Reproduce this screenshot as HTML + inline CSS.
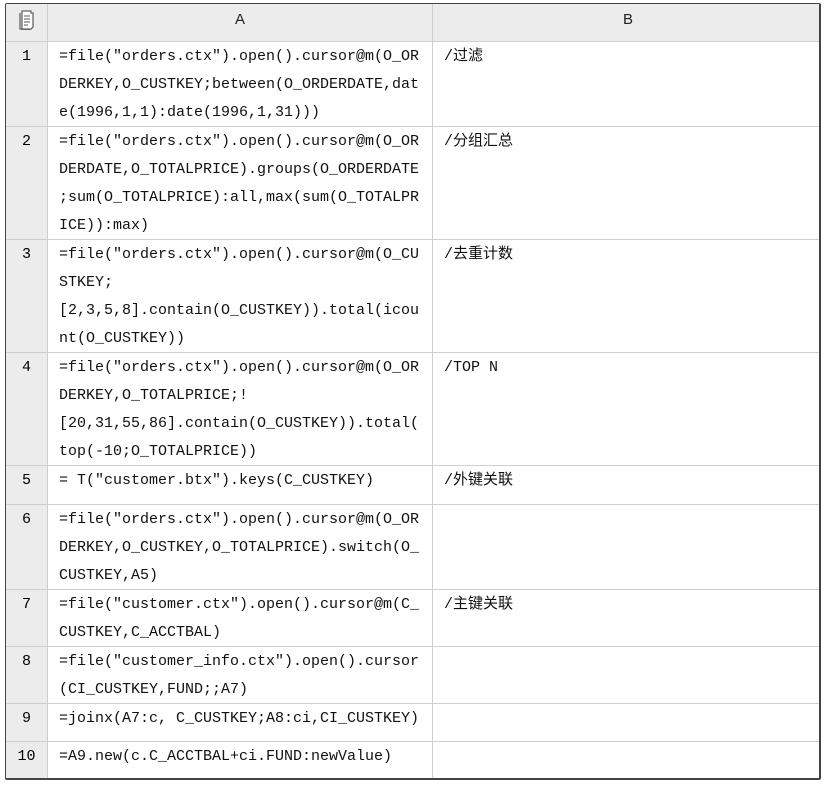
<!DOCTYPE html>
<html><head><meta charset="utf-8"><style>
*{box-sizing:border-box}
body{margin:0;background:#fff;width:826px;height:787px;position:relative;overflow:hidden}
.t{position:absolute;left:5px;top:3px;width:816px;height:777px;border:1px solid #444;border-right-width:2px;border-bottom-width:2px;border-radius:2px;overflow:hidden;background:#fff}
.h{position:absolute;top:0;height:38px;background:#ececec;border-bottom:1px solid #cfcfcf;font:15px "Liberation Sans",sans-serif;text-align:center;line-height:32px;color:#222}
.r{position:absolute;left:0;width:813px;border-bottom:1px solid #cfcfcf}
.n{position:absolute;left:0;top:0;bottom:0;width:42px;background:#ececec;border-right:1px solid #cfcfcf;font:15px "Liberation Mono",monospace;text-align:center;line-height:28px;padding-top:1px}
.a{position:absolute;left:42px;top:0;bottom:0;width:385px;border-right:1px solid #cfcfcf;padding-left:11px;padding-top:1px;font:15px "Liberation Mono",monospace;line-height:28px;white-space:pre;color:#111}
.b{position:absolute;left:427px;top:0;padding-left:11px;padding-top:1px;font:15px "Liberation Mono","Noto Sans CJK SC",monospace;line-height:28px;white-space:pre;color:#111}
</style></head><body>
<div class="t">
<div class="h" style="left:0;width:42px;border-right:1px solid #cfcfcf">
<svg width="18" height="20" viewBox="0 0 18 20" style="margin-top:6px"><path d="M4 1h9v2h2v14l-3 3H4z" fill="#fff" stroke="#666" stroke-width="1.3"/><path d="M2 3v16h10" fill="none" stroke="#666" stroke-width="1.3"/><path d="M6 6h6M6 9h6M6 12h6M6 15h4" stroke="#777" stroke-width="1.2"/></svg></div>
<div class="h" style="left:42px;width:385px;border-right:1px solid #cfcfcf">A</div>
<div class="h" style="left:427px;width:390px">B</div>

<div class="r" style="top:38px;height:85px"><div class="n">1</div><div class="a">=file("orders.ctx").open().cursor@m(O_OR
DERKEY,O_CUSTKEY;between(O_ORDERDATE,dat
e(1996,1,1):date(1996,1,31)))</div><div class="b">/过滤</div></div>

<div class="r" style="top:123px;height:113px"><div class="n">2</div><div class="a">=file("orders.ctx").open().cursor@m(O_OR
DERDATE,O_TOTALPRICE).groups(O_ORDERDATE
;sum(O_TOTALPRICE):all,max(sum(O_TOTALPR
ICE)):max)</div><div class="b">/分组汇总</div></div>

<div class="r" style="top:236px;height:113px"><div class="n">3</div><div class="a">=file("orders.ctx").open().cursor@m(O_CU
STKEY;
[2,3,5,8].contain(O_CUSTKEY)).total(icou
nt(O_CUSTKEY))</div><div class="b">/去重计数</div></div>

<div class="r" style="top:349px;height:113px"><div class="n">4</div><div class="a">=file("orders.ctx").open().cursor@m(O_OR
DERKEY,O_TOTALPRICE;!
[20,31,55,86].contain(O_CUSTKEY)).total(
top(-10;O_TOTALPRICE))</div><div class="b">/TOP N</div></div>

<div class="r" style="top:462px;height:39px"><div class="n">5</div><div class="a">= T("customer.btx").keys(C_CUSTKEY)</div><div class="b">/外键关联</div></div>

<div class="r" style="top:501px;height:85px"><div class="n">6</div><div class="a">=file("orders.ctx").open().cursor@m(O_OR
DERKEY,O_CUSTKEY,O_TOTALPRICE).switch(O_
CUSTKEY,A5)</div></div>

<div class="r" style="top:586px;height:57px"><div class="n">7</div><div class="a">=file("customer.ctx").open().cursor@m(C_
CUSTKEY,C_ACCTBAL)</div><div class="b">/主键关联</div></div>

<div class="r" style="top:643px;height:57px"><div class="n">8</div><div class="a">=file("customer_info.ctx").open().cursor
(CI_CUSTKEY,FUND;;A7)</div></div>

<div class="r" style="top:700px;height:38px"><div class="n">9</div><div class="a">=joinx(A7:c, C_CUSTKEY;A8:ci,CI_CUSTKEY)</div></div>

<div class="r" style="top:738px;height:40px;border-bottom:none"><div class="n">10</div><div class="a">=A9.new(c.C_ACCTBAL+ci.FUND:newValue)</div></div>
</div>
</body></html>
